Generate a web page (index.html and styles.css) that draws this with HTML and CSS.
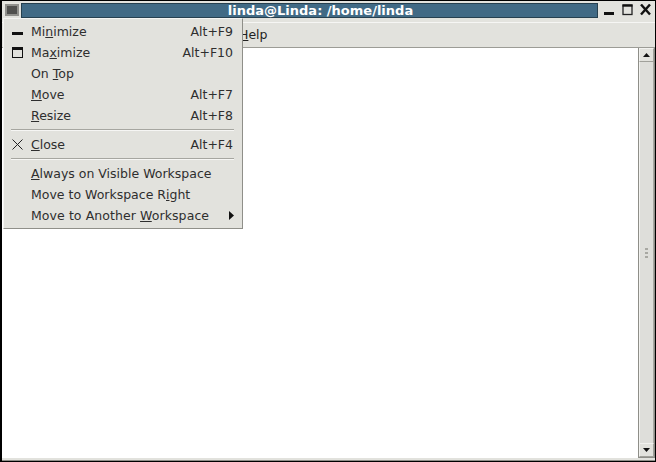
FILE: index.html
```html
<!DOCTYPE html>
<html lang="en">
<head>
<meta charset="utf-8">
<title>linda@Linda: /home/linda</title>
<link rel="stylesheet" href="styles.css">
</head>
<body>
<div class="window">
  <header class="titlebar">
    <div class="win-icon"><div class="win-icon-inner"></div></div>
    <div class="title">linda@Linda: /home/linda</div>
    <div class="win-buttons">
      <svg class="wb" width="13" height="13" viewBox="0 0 13 13"><rect x="1" y="8" width="10" height="3" fill="#111"/></svg>
      <svg class="wb" width="13" height="13" viewBox="0 0 13 13"><rect x="2" y="1" width="9" height="9.500" fill="none" stroke="#222" stroke-width="1.300"/><rect x="1.500" y="0.500" width="10" height="2.200" fill="#111"/></svg>
      <svg class="wb" width="13" height="13" viewBox="0 0 13 13"><path d="M2 0.500L11 10.500M11 0.500L2 10.500" stroke="#111" stroke-width="2.400" fill="none"/></svg>
    </div>
  </header>
  <nav class="menubar"><span class="menubar-item"><u>H</u>elp</span></nav>
  <div class="body">
    <div class="content"></div>
    <div class="scrollbar">
      <div class="arrow-btn"><svg width="7" height="4" viewBox="0 0 7 4"><path d="M3.500 0L7 4H0Z" fill="#111"/></svg></div>
      <div class="trough">
        <div class="grip"><i></i><i></i><i></i></div>
      </div>
      <div class="arrow-btn"><svg width="7" height="4" viewBox="0 0 7 4"><path d="M0 0H7L3.500 4Z" fill="#111"/></svg></div>
    </div>
  </div>
</div>
<div class="menu">
  <div class="item"><span class="ico"><svg width="11" height="11" viewBox="0 0 11 11"><rect x="0" y="6" width="11" height="3" fill="#111"/></svg></span><span class="label">Mi<u>n</u>imize</span><span class="key">Alt+F9</span></div>
  <div class="item"><span class="ico"><svg width="11" height="11" viewBox="0 0 11 11"><rect x="0.500" y="0.500" width="10" height="10" fill="none" stroke="#111"/><rect x="0" y="0" width="11" height="3" fill="#111"/></svg></span><span class="label">Ma<u>x</u>imize</span><span class="key">Alt+F10</span></div>
  <div class="item"><span class="ico"></span><span class="label">On <u>T</u>op</span></div>
  <div class="item"><span class="ico"></span><span class="label"><u>M</u>ove</span><span class="key">Alt+F7</span></div>
  <div class="item"><span class="ico"></span><span class="label"><u>R</u>esize</span><span class="key">Alt+F8</span></div>
  <div class="sep"></div>
  <div class="item"><span class="ico"><svg width="11" height="11" viewBox="0 0 11 11"><path d="M0.500 0.500L10.500 10.500M10.500 0.500L0.500 10.500" stroke="#222" stroke-width="1" fill="none"/></svg></span><span class="label"><u>C</u>lose</span><span class="key">Alt+F4</span></div>
  <div class="sep"></div>
  <div class="item"><span class="ico"></span><span class="label"><u>A</u>lways on Visible Workspace</span></div>
  <div class="item"><span class="ico"></span><span class="label">Move to Workspace R<u>i</u>ght</span></div>
  <div class="item"><span class="ico"></span><span class="label label-wide">Move to Another <u>W</u>orkspace</span><svg class="sub" width="5" height="9" viewBox="0 0 5 9"><path d="M0 0L5 4.500L0 9Z" fill="#111"/></svg></div>
</div>
</body>
</html>
```
FILE: styles.css
```css
* { box-sizing: border-box; }
html, body { margin: 0; padding: 0; }
body {
  width: 656px;
  height: 462px;
  overflow: hidden;
  position: relative;
  background: #000;
  font-family: "DejaVu Sans", sans-serif;
  font-size: 12.500px;
  color: #2e2e2e;
}
.window {
  width: 656px;
  height: 462px;
  padding: 1px 1px 1px 2px;
  display: flex;
  flex-direction: column;
}
.titlebar {
  height: 21px;
  flex: none;
  display: flex;
  align-items: stretch;
  background: #e3e3de;
  padding: 2px 0 4px;
}
.win-icon {
  width: 19px;
  padding: 1px 0 0 3px;
}
.win-icon-inner {
  width: 14px;
  height: 12px;
  background: #50504e;
  border: 2px solid #90908c;
}
.title {
  flex: none;
  width: 577px;
  padding-left: 22px;
  background: #416a85;
  border: 1px solid #26404f;
  color: #fff;
  font-weight: bold;
  font-size: 13px;
  line-height: 14px;
  text-align: center;
  white-space: nowrap;
}
.win-buttons {
  display: flex;
  align-items: flex-start;
  gap: 5px;
  padding-left: 5px;
  padding-top: 1px;
}
.wb { flex: none; }
.menubar {
  height: 26px;
  flex: none;
  background: #e2e2dd;
  border-top: 1px solid #f6f6f4;
  border-bottom: 1px solid #9c9c96;
  padding: 4px 0 0 237px;
  line-height: 16px;
}
.menubar-item { color: #222; }
.body {
  flex: 1;
  display: flex;
  min-height: 0;
  background: #e2e2dd;
  padding-bottom: 2px;
  border-bottom: 1px solid #8e8e88;
}
.content {
  flex: 1;
  background: #fff;
}
.scrollbar {
  width: 17px;
  flex: none;
  display: flex;
  flex-direction: column;
  background: #c4c4bd;
  border-left: 1px solid #8e8e88;
  border-right: 1px solid #8e8e88;
  border-bottom: 1px solid #8e8e88;
}
.arrow-btn {
  height: 14px;
  flex: none;
  display: flex;
  align-items: center;
  justify-content: center;
  background: #e2e2dd;
  border: 1px solid #a0a09a;
  border-top-color: #f2f2ef;
  border-left-color: #f2f2ef;
}
.trough {
  flex: 1;
  display: flex;
  flex-direction: column;
  align-items: center;
  justify-content: center;
  background: #dededa;
  border-left: 1px solid #f2f2ef;
  border-right: 1px solid #a8a8a2;
}
.grip { display: flex; flex-direction: column; gap: 2px; }
.grip i { display: block; width: 3px; height: 2px; background: #a8a8a2; }
.menu {
  position: absolute;
  left: 3px;
  top: 18px;
  width: 240px;
  height: 211px;
  background: #e2e2dd;
  border: 1px solid #f4f4f2;
  border-right-color: #8f8f89;
  border-bottom-color: #8f8f89;
  padding-top: 2px;
}
.item {
  height: 21px;
  display: flex;
  align-items: center;
  padding: 0 9px 0 8px;
  white-space: nowrap;
}
.ico {
  width: 11px;
  height: 11px;
  flex: none;
  margin-right: 8px;
  display: flex;
}
.label { flex: 1; }
.label-wide { letter-spacing: 0.080px; }
.key { flex: none; }
.sub { flex: none; margin-right: -1px; }
.sep {
  height: 2px;
  margin: 3px 8px 3px 7px;
  background: #a6a6a0;
  border-bottom: 1px solid #f6f6f4;
}
```
